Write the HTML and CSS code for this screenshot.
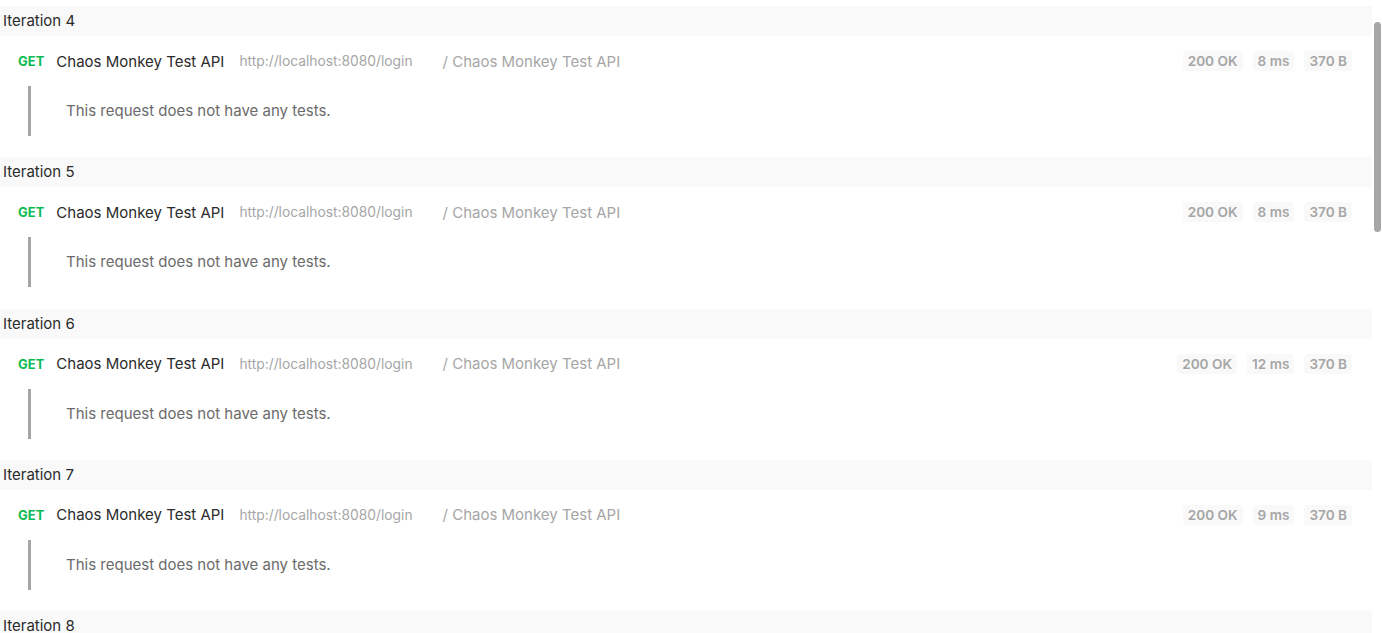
FILE: index.html
```html
<!DOCTYPE html>
<html lang="en">
 <head>
  <meta charset="utf-8"/>
  <title>Run Results</title>
  <link rel="stylesheet" href="styles.css">
 </head>
 <body>
  <main class="results">
   <section class="iteration">
    <div class="iteration-title">Iteration 4</div>
    <div class="request">
     <span class="method">GET</span>
     <span class="req-name">Chaos Monkey Test API</span>
     <span class="req-url">http://localhost:8080/login</span>
     <span class="req-path">/ Chaos Monkey Test API</span>
     <div class="stats">
      <span class="badge">200 OK</span>
      <span class="badge">8 ms</span>
      <span class="badge">370 B</span>
     </div>
    </div>
    <div class="tests"><p>This request does not have any tests.</p></div>
   </section>
   <section class="iteration">
    <div class="iteration-title">Iteration 5</div>
    <div class="request">
     <span class="method">GET</span>
     <span class="req-name">Chaos Monkey Test API</span>
     <span class="req-url">http://localhost:8080/login</span>
     <span class="req-path">/ Chaos Monkey Test API</span>
     <div class="stats">
      <span class="badge">200 OK</span>
      <span class="badge">8 ms</span>
      <span class="badge">370 B</span>
     </div>
    </div>
    <div class="tests"><p>This request does not have any tests.</p></div>
   </section>
   <section class="iteration">
    <div class="iteration-title">Iteration 6</div>
    <div class="request">
     <span class="method">GET</span>
     <span class="req-name">Chaos Monkey Test API</span>
     <span class="req-url">http://localhost:8080/login</span>
     <span class="req-path">/ Chaos Monkey Test API</span>
     <div class="stats">
      <span class="badge">200 OK</span>
      <span class="badge">12 ms</span>
      <span class="badge">370 B</span>
     </div>
    </div>
    <div class="tests"><p>This request does not have any tests.</p></div>
   </section>
   <section class="iteration">
    <div class="iteration-title">Iteration 7</div>
    <div class="request">
     <span class="method">GET</span>
     <span class="req-name">Chaos Monkey Test API</span>
     <span class="req-url">http://localhost:8080/login</span>
     <span class="req-path">/ Chaos Monkey Test API</span>
     <div class="stats">
      <span class="badge">200 OK</span>
      <span class="badge">9 ms</span>
      <span class="badge">370 B</span>
     </div>
    </div>
    <div class="tests"><p>This request does not have any tests.</p></div>
   </section>
   <section class="iteration">
    <div class="iteration-title">Iteration 8</div>
   </section>
  </main>
  <div class="scrollbar"></div>
 </body>
</html>
```

FILE: styles.css
```css
* {
  margin: 0;
  padding: 0;
  box-sizing: border-box;
}

html, body {
  height: 100%;
  overflow: hidden;
}

body {
  background: #ffffff;
  font-family: Inter, "Open Sans", sans-serif;
  font-size: 15px;
  color: #2b2b2b;
}

.results {
  padding-top: 6px;
  margin-right: 10px;
}

.iteration {
  padding-bottom: 21.3px;
}

.iteration-title {
  height: 30px;
  line-height: 30px;
  padding-left: 3px;
  background: #f9f9f9;
  color: #2b2b2b;
}

.request {
  display: flex;
  align-items: center;
  height: 50px;
  padding: 0 20px 0 18px;
}

.method {
  color: #0cbb52;
  font-size: 13px;
  font-weight: 700;
  margin-right: 12px;
}

.req-name {
  margin-right: 15px;
}

.req-url {
  color: #a6a6a6;
  font-size: 13.8px;
  margin-right: 30px;
}

.req-path {
  color: #a6a6a6;
}

.stats {
  margin-left: auto;
  display: flex;
  gap: 10px;
}

.badge {
  display: inline-block;
  height: 20px;
  line-height: 20px;
  padding: 0 5px;
  border-radius: 4px;
  background: #f9f9f9;
  color: #a6a6a6;
  font-size: 13.6px;
  font-weight: 600;
}

.tests {
  margin-left: 28px;
  height: 50px;
  border-left: 3px solid #a6a6a6;
  display: flex;
  align-items: center;
  padding-left: 35px;
  padding-bottom: 1px;
  color: #6b6b6b;
}

/* scroll thumb over the list */
.scrollbar {
  position: fixed;
  top: 22px;
  right: 1px;
  width: 7px;
  height: 210px;
  border-radius: 4px;
  background: #a6a6a6;
}
```
